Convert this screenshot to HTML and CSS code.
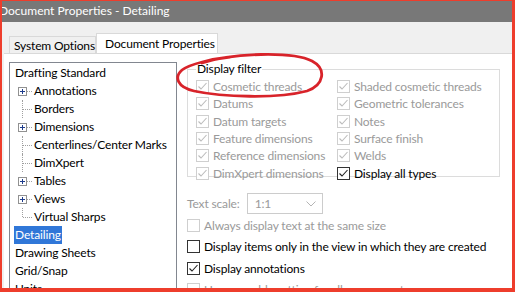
FILE: index.html
```html
<!DOCTYPE html>
<html lang="en">
<head>
  <meta charset="UTF-8">
  <title>Document Properties - Detailing</title>
  <link rel="stylesheet" href="styles.css">
</head>
<body>
  <div class="frame">
    <div class="titlebar">Document Properties - Detailing</div>
    <div class="dialog">
      <div class="tabs">
        <div class="tab">System Options</div>
        <div class="tab active">Document Properties</div>
      </div>
      <div class="page">
        <ul class="tree">
          <li class="node">Drafting Standard</li>
          <li class="child plus">Annotations</li>
          <li class="child">Borders</li>
          <li class="child plus">Dimensions</li>
          <li class="child">Centerlines/Center Marks</li>
          <li class="child">DimXpert</li>
          <li class="child plus">Tables</li>
          <li class="child plus">Views</li>
          <li class="child last">Virtual Sharps</li>
          <li class="node"><span class="selected">Detailing</span></li>
          <li class="node">Drawing Sheets</li>
          <li class="node">Grid/Snap</li>
          <li class="node">Units</li>
        </ul>

        <div class="options">
          <fieldset class="group">
            <legend>Display filter</legend>
            <div class="grid">
              <div class="col">
                <label class="check off on">Cosmetic threads</label>
                <label class="check off on">Datums</label>
                <label class="check off on">Datum targets</label>
                <label class="check off on">Feature dimensions</label>
                <label class="check off on">Reference dimensions</label>
                <label class="check off on">DimXpert dimensions</label>
              </div>
              <div class="col">
                <label class="check off on">Shaded cosmetic threads</label>
                <label class="check off on">Geometric tolerances</label>
                <label class="check off on">Notes</label>
                <label class="check off on">Surface finish</label>
                <label class="check off on">Welds</label>
                <label class="check on">Display all types</label>
              </div>
            </div>
          </fieldset>

          <div class="scale">
            <span class="muted">Text scale:</span>
            <div class="combo">
              <span>1:1</span>
              <svg width="10" height="6" viewBox="0 0 10 6"><path d="M0.5 0.5 L5 5 L9.5 0.5" fill="none" stroke="#b4b4b4"/></svg>
            </div>
          </div>

          <label class="check off row">Always display text at the same size</label>
          <label class="check row">Display items only in the view in which they are created</label>
          <label class="check on row">Display annotations</label>
          <label class="check off row">Use assembly setting for all components</label>
        </div>
      </div>
    </div>

    <!-- hand-drawn highlight -->
    <svg class="circle" width="160" height="50" viewBox="0 0 160 50">
      <path d="M30 10 C60 0 120 -2 140 8 C155 16 152 32 135 38 C105 46 50 44 22 38 C5 34 2 24 10 17 C18 11 40 6 58 4" fill="none" stroke="#d8232a" stroke-width="2.8" stroke-linecap="round"/>
    </svg>
  </div>
</body>
</html>
```

FILE: styles.css
```css
body {
  margin: 0;
  width: 515px;
  height: 292px;
  overflow: hidden;
  font-family: 'Lato', 'Noto Sans', sans-serif;
  font-size: 12px;
  letter-spacing: -0.15px;
  color: #000;
}
.frame {
  position: relative;
  box-sizing: border-box;
  width: 515px;
  height: 292px;
  border-style: solid;
  border-color: #ee3d2c;
  border-width: 1px 3px 4px 2px;
  background: #f0f0f0;
  overflow: hidden;
}
.titlebar {
  height: 21px;
  line-height: 20px;
  background: #787878;
  color: #fff;
  font-size: 12px;
  letter-spacing: 0;
  text-indent: -3px;
  white-space: nowrap;
}
.dialog {
  padding: 11px 0 0 2px;
}
.tabs {
  display: flex;
  align-items: flex-end;
  height: 20px;
  padding-left: 5px;
}
.tab {
  box-sizing: border-box;
  width: 87px;
  height: 17px;
  line-height: 17px;
  padding: 0 4px;
  border: 1px solid #d9d9d9;
  border-bottom: none;
  background: #f0f0f0;
  white-space: nowrap;
}
.tab.active {
  width: 122px;
  height: 20px;
  line-height: 20px;
  padding: 0 8px;
  background: #fff;
}
.page {
  display: flex;
  height: 300px;
  padding: 8px 0 0 5px;
  background: #fff;
  border-top: 1px solid #d9d9d9;
}

/* tree */
.tree {
  flex: none;
  width: 161px;
  list-style: none;
  margin: 0;
  padding: 1px 0 0 5px;
  border: 1px solid #828790;
  border-bottom: none;
}
.tree li {
  position: relative;
  height: 18px;
  line-height: 18px;
  white-space: nowrap;
}
.child {
  padding-left: 19px;
}
.child::before {
  content: '';
  position: absolute;
  left: 7px;
  top: 0;
  height: 18px;
  border-left: 1px dotted #a0a0a0;
}
.child.last::before {
  height: 9px;
}
.child::after {
  content: '';
  position: absolute;
  left: 8px;
  top: 9px;
  width: 9px;
  border-top: 1px dotted #a0a0a0;
}
.child.plus::after {
  left: 12px;
  width: 5px;
}
.child.plus {
  background-image:
    linear-gradient(#1e3c8c, #1e3c8c),
    linear-gradient(#1e3c8c, #1e3c8c),
    linear-gradient(#fff, #fff),
    linear-gradient(#919191, #919191);
  background-size: 5px 1px, 1px 5px, 7px 7px, 9px 9px;
  background-position: 5px 9px, 7px 7px, 4px 6px, 3px 5px;
  background-repeat: no-repeat;
}
.child.plus::before {
  z-index: -1;
}
.selected {
  display: inline-block;
  margin-left: -1px;
  padding: 0 1px;
  background: #3077d8;
  color: #fff;
}

/* right options */
.options {
  width: 313px;
  padding-left: 10px;
}
.group {
  box-sizing: border-box;
  height: 115px;
  margin: 0;
  padding: 0 0 2px 8px;
  border: 1px solid #dcdcdc;
}
.group legend {
  padding: 0 1px;
  line-height: 14px;
}
.grid {
  display: flex;
  margin-top: 2px;
}
.col {
  display: flex;
  flex-direction: column;
  width: 141px;
}
.check {
  display: flex;
  align-items: center;
  height: 17.3px;
  white-space: nowrap;
}
.check::before {
  content: '';
  flex: none;
  box-sizing: border-box;
  width: 13px;
  height: 13px;
  margin-right: 4px;
  border: 1px solid #333;
  background: #fff;
}
.check.on::before {
  background: #fff url("data:image/svg+xml,%3Csvg xmlns='http://www.w3.org/2000/svg' width='11' height='11'%3E%3Cpath d='M1.5 5.5 L4 8 L9.5 2' fill='none' stroke='%23222' stroke-width='1.1'/%3E%3C/svg%3E") center / 11px 11px no-repeat;
}
.check.off {
  color: #9a9a9a;
}
.check.off::before {
  border-color: #cfcfcf;
}
.check.off.on::before {
  background-image: url("data:image/svg+xml,%3Csvg xmlns='http://www.w3.org/2000/svg' width='11' height='11'%3E%3Cpath d='M1.5 5.5 L4 8 L9.5 2' fill='none' stroke='%23bcbcbc' stroke-width='1.1'/%3E%3C/svg%3E");
}
.muted {
  color: #9a9a9a;
}
.scale {
  display: flex;
  align-items: center;
  gap: 7px;
  height: 21px;
  margin: 16px 0 1px;
}
.combo {
  box-sizing: border-box;
  display: flex;
  align-items: center;
  justify-content: space-between;
  width: 76px;
  height: 21px;
  padding: 0 6px 0 7px;
  border: 1px solid #ccc;
  color: #9a9a9a;
}
.row {
  height: 21.3px;
}
.circle {
  position: absolute;
  left: 170px;
  top: 52px;
}
```
